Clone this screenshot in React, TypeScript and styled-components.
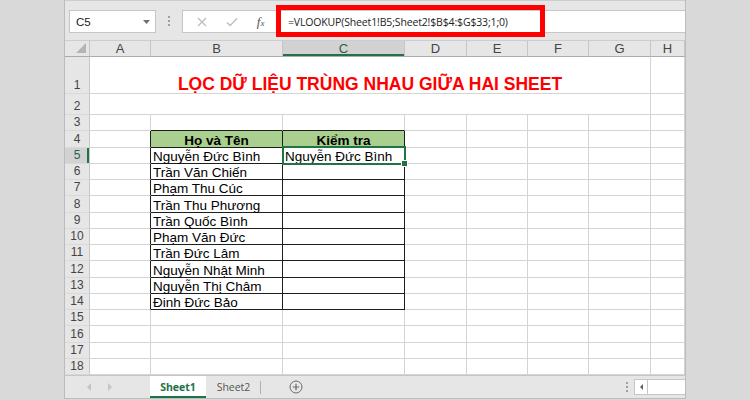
import React from "react";
import styled, { createGlobalStyle } from "styled-components";

const GlobalStyle = createGlobalStyle`
  html, body {
    margin: 0;
    padding: 0;
    background: #d9d9d9;
  }
  body {
    font-family: "Liberation Sans", Arial, sans-serif;
  }
`;

const GREEN = "#217346";
const GRID = "#d4d4d4";
const INK = "#1e1e1e";

const COLS = ["A", "B", "C", "D", "E", "F", "G", "H"];

const NAMES = [
  "Nguyễn Đức Bình",
  "Trần Văn Chiến",
  "Phạm Thu Cúc",
  "Trần Thu Phương",
  "Trần Quốc Bình",
  "Phạm Văn Đức",
  "Trần Đức Lâm",
  "Nguyễn Nhật Minh",
  "Nguyễn Thị Châm",
  "Đinh Đức Bảo",
];

const Page = styled.div`
  height: 400px;
  display: flex;
  justify-content: center;
  background: #d9d9d9;
`;

const Window = styled.div`
  width: 622px;
  height: 399px;
  box-sizing: border-box;
  display: flex;
  flex-direction: column;
  background: #e6e6e6;
  border: 1px solid #bcbcbc;
  border-top: none;
`;

/* ---------- formula bar ---------- */

const FormulaBar = styled.div`
  flex: 0 0 41px;
  box-sizing: border-box;
  display: flex;
  align-items: flex-start;
  padding: 9px 0 0 4px;
  border-top: 1px solid #cdcdcd;
  border-bottom: 1px solid #cdcdcd;
`;

const NameBox = styled.div`
  width: 87px;
  height: 23px;
  box-sizing: border-box;
  display: flex;
  align-items: center;
  justify-content: space-between;
  padding: 0 5px 0 6px;
  background: #fff;
  border: 1px solid #c6c6c6;
  font-size: 11.5px;
  color: #222;
`;

const Grip = styled.div`
  width: 26px;
  height: 22px;
  display: flex;
  flex-direction: column;
  align-items: center;
  justify-content: center;
  gap: 2px;
`;

const GripDot = styled.span`
  width: 2px;
  height: 2px;
  background: #a0a0a0;
`;

const FormulaBox = styled.div`
  flex: 1;
  height: 23px;
  box-sizing: border-box;
  display: flex;
  background: #fff;
  border: 1px solid #c6c6c6;
  border-right: none;
`;

const FxButtons = styled.div`
  width: 93px;
  display: flex;
  align-items: center;
  justify-content: space-around;
  padding: 0 2px 0 4px;
  box-sizing: border-box;
`;

const FxLabel = styled.span`
  font-family: "Liberation Serif", "Times New Roman", serif;
  font-style: italic;
  font-size: 13px;
  color: #555;
  sub {
    font-size: 9px;
    vertical-align: baseline;
  }
`;

const FormulaInput = styled.div`
  position: relative;
  flex: 1;
  display: flex;
  align-items: center;
  padding-left: 11px;
  border-left: 1px solid #dcdcdc;
  font-family: "Open Sans", "Liberation Sans", sans-serif;
  font-size: 10.5px;
  letter-spacing: -0.15px;
  color: #222;
`;

const Highlight = styled.div`
  position: absolute;
  left: -1px;
  top: -6px;
  width: 269px;
  height: 32px;
  box-sizing: border-box;
  border: 5px solid #ff0000;
  pointer-events: none;
`;

/* ---------- sheet ---------- */

const Sheet = styled.div`
  flex: 0 0 auto;
  display: grid;
  grid-template-columns: 25px 61px 132px 122px 62px 61px 61px 62px 1fr;
  grid-template-rows: 16px 37px 21px repeat(16, 16.25px);
  background: #fff;
`;

const Corner = styled.div`
  position: relative;
  background: #e6e6e6;
  border-right: 1px solid #c6c6c6;
  border-bottom: 1px solid #ababab;
  box-sizing: border-box;
  &::after {
    content: "";
    position: absolute;
    right: 3px;
    bottom: 3px;
    border-style: solid;
    border-width: 0 0 10px 10px;
    border-color: transparent transparent #b4b4b4 transparent;
  }
`;

const ColHead = styled.div<{ $active?: boolean }>`
  display: flex;
  align-items: center;
  justify-content: center;
  box-sizing: border-box;
  background: ${(p) => (p.$active ? "#d2d2d2" : "#e6e6e6")};
  color: ${(p) => (p.$active ? "#2d5f46" : "#444")};
  border-right: 1px solid #c6c6c6;
  border-bottom: 1px solid #ababab;
  box-shadow: ${(p) => (p.$active ? `inset 0 -2px 0 ${GREEN}` : "none")};
  font-size: 13px;
  overflow: hidden;
`;

const RowHead = styled.div<{ $active?: boolean }>`
  display: flex;
  align-items: flex-end;
  justify-content: center;
  box-sizing: border-box;
  padding-bottom: 1px;
  background: ${(p) => (p.$active ? "#d2d2d2" : "#e6e6e6")};
  color: ${(p) => (p.$active ? "#2d5f46" : "#444")};
  border-right: 1px solid #c6c6c6;
  border-bottom: 1px solid #d9d9d9;
  box-shadow: ${(p) => (p.$active ? `inset -2px 0 0 ${GREEN}` : "none")};
  font-size: 12px;
  line-height: 14px;
`;

const Cell = styled.div<{
  $rb?: boolean;
  $bb?: boolean;
  $fill?: string;
  $head?: boolean;
}>`
  position: relative;
  display: flex;
  align-items: flex-end;
  justify-content: ${(p) => (p.$head ? "center" : "flex-start")};
  box-sizing: border-box;
  min-width: 0;
  padding: 0 2px;
  border-right: 1px solid ${(p) => (p.$rb ? INK : GRID)};
  border-bottom: 1px solid ${(p) => (p.$bb ? INK : GRID)};
  background: ${(p) => p.$fill ?? "#fff"};
  font-size: 13.5px;
  font-weight: ${(p) => (p.$head ? 700 : 400)};
  line-height: 12px;
  white-space: nowrap;
  color: #000;
`;

const MergedCell = styled(Cell)`
  grid-column: span 7;
  justify-content: center;
`;

const Title = styled.span`
  color: #ff0000;
  font-weight: 700;
  font-size: 17.5px;
  line-height: 17px;
`;

const Selection = styled.div`
  position: absolute;
  left: -1px;
  top: -2px;
  right: -2px;
  bottom: -2px;
  border: 2px solid ${GREEN};
  z-index: 2;
  pointer-events: none;
`;

const FillHandle = styled.div`
  position: absolute;
  right: -4px;
  bottom: -4px;
  width: 5px;
  height: 5px;
  background: ${GREEN};
  border: 1px solid #fff;
`;

/* ---------- sheet tabs ---------- */

const TabBar = styled.div`
  flex: 1 1 0;
  min-height: 0;
  display: flex;
  align-items: stretch;
  border-top: 1px solid #c6c6c6;
  background: #e6e6e6;
`;

const NavArrows = styled.div`
  width: 85px;
  display: flex;
  align-items: center;
  gap: 17px;
  padding-left: 22px;
  box-sizing: border-box;
`;

const Tab = styled.div<{ $active?: boolean }>`
  position: relative;
  width: ${(p) => (p.$active ? 56 : 55)}px;
  display: flex;
  align-items: center;
  justify-content: center;
  box-sizing: border-box;
  background: ${(p) => (p.$active ? "#fff" : "transparent")};
  color: ${(p) => (p.$active ? GREEN : "#555")};
  font-family: "Open Sans", "Liberation Sans", sans-serif;
  font-weight: ${(p) => (p.$active ? 700 : 400)};
  font-size: 10.5px;
  box-shadow: ${(p) => (p.$active ? `inset 0 -2px 0 ${GREEN}` : "none")};
  &::after {
    content: "";
    display: ${(p) => (p.$active ? "none" : "block")};
    position: absolute;
    right: 0;
    top: 5px;
    bottom: 4px;
    width: 1px;
    background: #b0b0b0;
  }
`;

const AddSheet = styled.div`
  width: 70px;
  display: flex;
  align-items: center;
  justify-content: center;
`;

const Spacer = styled.div`
  flex: 1;
`;

const ScrollGrip = styled(Grip)`
  width: 14px;
  height: auto;
`;

const HScroll = styled.div`
  width: 50px;
  display: flex;
  margin: 3px 0;
  background: #fff;
  border: 1px solid #c6c6c6;
  border-right: none;
`;

const ScrollBtn = styled.div`
  width: 12px;
  display: flex;
  align-items: center;
  justify-content: center;
  border-right: 1px solid #c6c6c6;
`;

const Tri = ({ dir, color, size = 4 }: { dir: "l" | "r"; color: string; size?: number }) => (
  <svg width={size} height={size * 2} viewBox="0 0 4 8">
    {dir === "l" ? <polygon points="4,0 0,4 4,8" fill={color} /> : <polygon points="0,0 4,4 0,8" fill={color} />}
  </svg>
);

export default function App() {
  const rows: React.ReactNode[] = [];

  rows.push(<Corner key="corner" />);
  COLS.forEach((c) =>
    rows.push(
      <ColHead key={`h${c}`} $active={c === "C"}>
        {c}
      </ColHead>
    )
  );

  for (let r = 1; r <= 18; r++) {
    rows.push(
      <RowHead key={`r${r}`} $active={r === 5}>
        {r}
      </RowHead>
    );
    if (r <= 2) {
      rows.push(
        <MergedCell key={`m${r}`}>
          {r === 1 && <Title>LỌC DỮ LIỆU TRÙNG NHAU GIỮA HAI SHEET</Title>}
        </MergedCell>
      );
      rows.push(<Cell key={`H${r}`} />);
      continue;
    }
    const inTable = r >= 4 && r <= 14;
    COLS.forEach((c) => {
      const key = `${c}${r}`;
      if (c === "A") {
        rows.push(<Cell key={key} $rb={inTable} />);
      } else if (c === "B" || c === "C") {
        const head = r === 4;
        let text = "";
        if (head) text = c === "B" ? "Họ và Tên" : "Kiểm tra";
        else if (inTable && c === "B") text = NAMES[r - 5];
        else if (r === 5 && c === "C") text = "Nguyễn Đức Bình";
        rows.push(
          <Cell
            key={key}
            $rb={inTable}
            $bb={r >= 3 && r <= 14}
            $head={head}
            $fill={head ? "#a9d08e" : undefined}
          >
            {text}
            {r === 5 && c === "C" && (
              <Selection>
                <FillHandle />
              </Selection>
            )}
          </Cell>
        );
      } else {
        rows.push(<Cell key={key} />);
      }
    });
  }

  return (
    <Page>
      <GlobalStyle />
      <Window>
        <FormulaBar>
          <NameBox>
            C5
            <svg width="7" height="4" viewBox="0 0 7 4">
              <polygon points="0,0 7,0 3.5,4" fill="#707070" />
            </svg>
          </NameBox>
          <Grip>
            <GripDot />
            <GripDot />
            <GripDot />
          </Grip>
          <FormulaBox>
            <FxButtons>
              <svg width="10" height="10" viewBox="0 0 10 10">
                <path d="M1 1 L9 9 M9 1 L1 9" stroke="#bdbdbd" strokeWidth="1.3" fill="none" />
              </svg>
              <svg width="12" height="10" viewBox="0 0 12 10">
                <path d="M1 5.5 L4.2 8.6 L11 1.2" stroke="#bdbdbd" strokeWidth="1.4" fill="none" />
              </svg>
              <FxLabel>
                f<sub>x</sub>
              </FxLabel>
            </FxButtons>
            <FormulaInput>
              =VLOOKUP(Sheet1!B5;Sheet2!$B$4:$G$33;1;0)
              <Highlight />
            </FormulaInput>
          </FormulaBox>
        </FormulaBar>

        <Sheet>{rows}</Sheet>

        <TabBar>
          <NavArrows>
            <Tri dir="l" color="#c4c4c4" />
            <Tri dir="r" color="#c4c4c4" />
          </NavArrows>
          <Tab $active>Sheet1</Tab>
          <Tab>Sheet2</Tab>
          <AddSheet>
            <svg width="14" height="14" viewBox="0 0 14 14">
              <circle cx="7" cy="7" r="6" stroke="#6a6a6a" strokeWidth="1" fill="none" />
              <path d="M7 3.8 V10.2 M3.8 7 H10.2" stroke="#6a6a6a" strokeWidth="1.2" />
            </svg>
          </AddSheet>
          <Spacer />
          <ScrollGrip>
            <GripDot />
            <GripDot />
            <GripDot />
          </ScrollGrip>
          <HScroll>
            <ScrollBtn>
              <Tri dir="l" color="#606060" size={3} />
            </ScrollBtn>
          </HScroll>
        </TabBar>
      </Window>
    </Page>
  );
}
